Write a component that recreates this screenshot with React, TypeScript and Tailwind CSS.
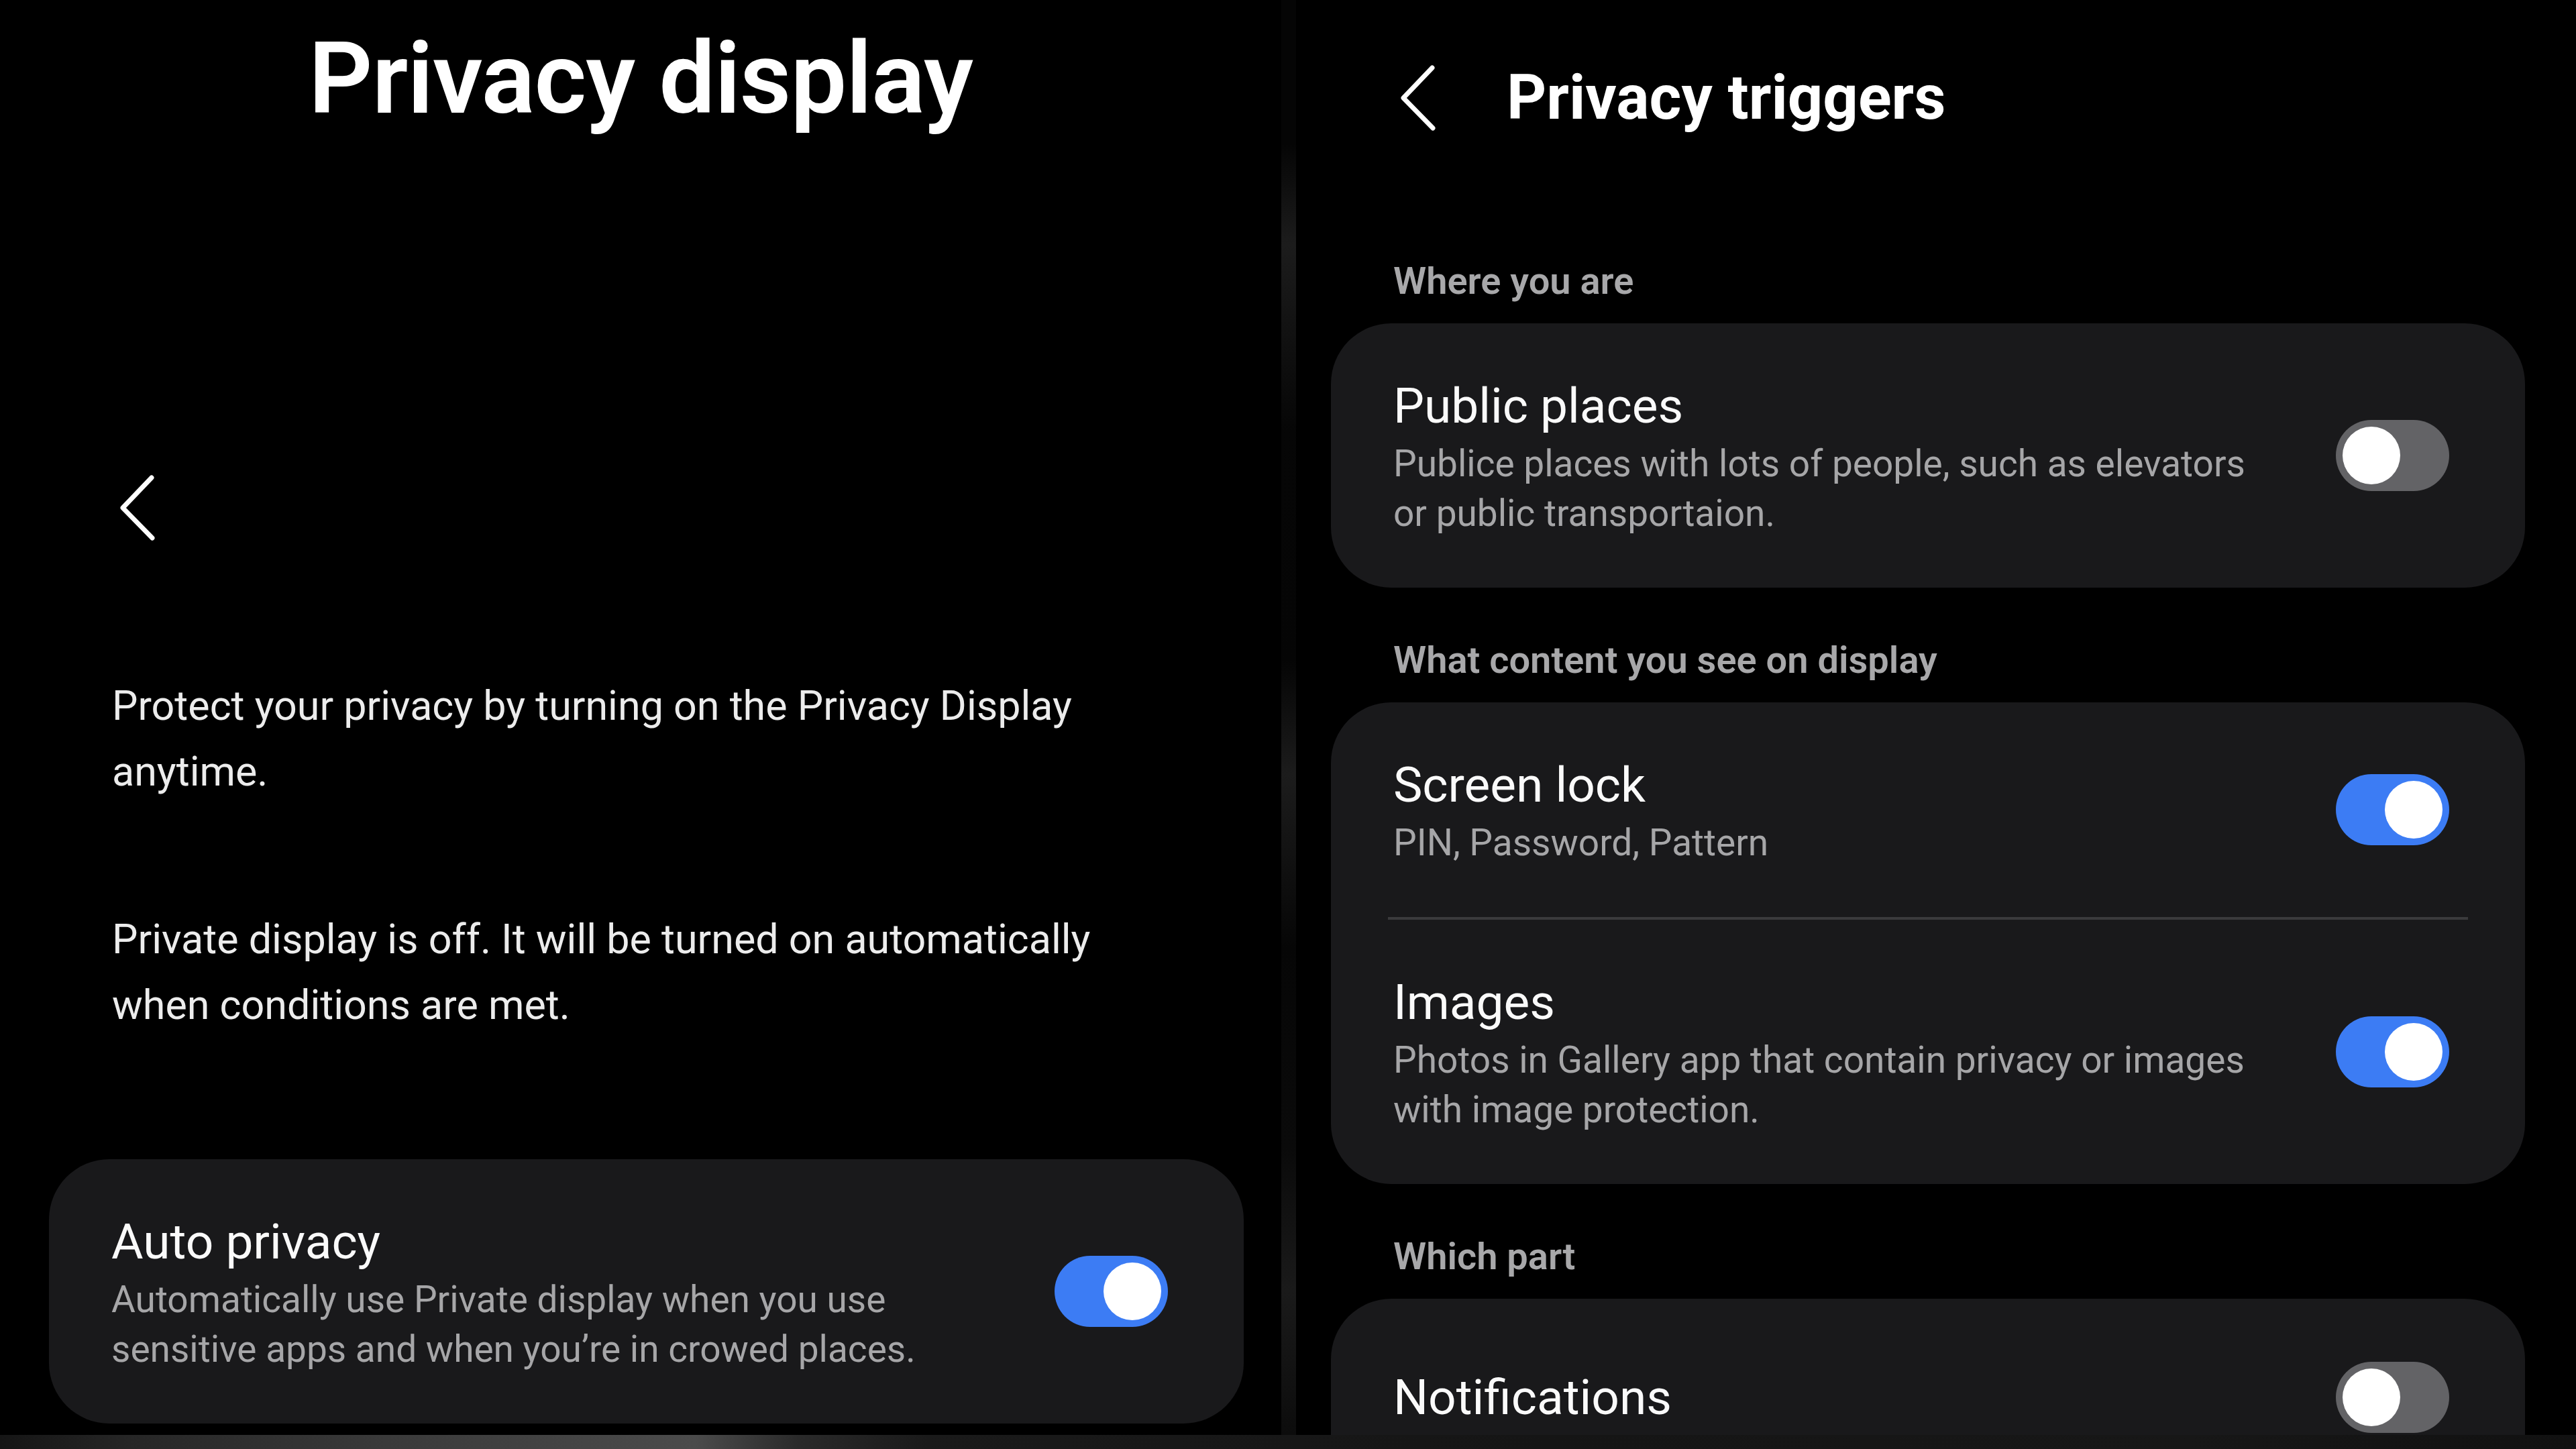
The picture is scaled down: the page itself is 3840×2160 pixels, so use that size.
import clsx from "clsx";

type Row = {
  title: string;
  desc?: string[];
  on: boolean;
};

function Chevron({ className }: { className?: string }) {
  return (
    <svg viewBox="0 0 60 100" className={className} fill="none" stroke="white" strokeWidth={7} strokeLinecap="round" strokeLinejoin="round">
      <polyline points="51,5 8,50 52,95" />
    </svg>
  );
}

function Toggle({ on }: { on: boolean }) {
  return (
    <div
      className={clsx(
        "w-[169px] h-[106px] rounded-full p-[10px] flex shrink-0",
        on ? "bg-[#3c7cf4] justify-end" : "bg-[#636366] justify-start"
      )}
    >
      <div className="w-[86px] h-[86px] rounded-full bg-white" />
    </div>
  );
}

function SettingRow({ title, desc, on }: Row) {
  return (
    <div className={clsx("flex items-center pl-[93px] pr-[113px]", desc ? "py-[74px]" : "py-[94px]")}>
      <div className="flex-1 min-w-0">
        <div className="text-[73px] leading-[98px] text-[#fafafa]">{title}</div>
        {desc?.map((line) => (
          <div key={line} className="text-[55px] leading-[74px] text-[#a6a6a8] whitespace-nowrap">
            {line}
          </div>
        ))}
      </div>
      <Toggle on={on} />
    </div>
  );
}

function Card({ rows }: { rows: Row[] }) {
  return (
    <div className="shrink-0 bg-[#19191b] rounded-[90px] overflow-hidden">
      {rows.map((row, i) => (
        <div key={row.title}>
          {i > 0 && <div className="mx-[85px] h-[4px] bg-[#3a3a3c]" />}
          <SettingRow {...row} />
        </div>
      ))}
    </div>
  );
}

function SectionHeader({ label, first }: { label: string; first?: boolean }) {
  return (
    <div
      className={clsx(
        "shrink-0 pl-[93px] pb-[28px] text-[56px] leading-[70px] font-semibold text-[#a8a8aa]",
        first ? "pt-[188px]" : "pt-[73px]"
      )}
    >
      {label}
    </div>
  );
}

export default function App() {
  return (
    <div className="w-[3840px] h-[2160px] bg-black flex flex-col overflow-hidden font-['Roboto','Noto_Sans',sans-serif]">
      <div className="flex flex-1 min-h-0">
        {/* Privacy display */}
        <section className="w-[1910px] shrink-0 flex flex-col overflow-hidden">
          <h1 className="shrink-0 pt-[43px] text-center text-[149px] leading-none font-semibold text-white tracking-[-1px]">
            Privacy display
          </h1>
          <Chevron className="shrink-0 ml-[175px] mt-[515px] w-[60px] h-[100px]" />
          <div className="shrink-0 mt-[196px] pl-[167px] text-[61px] leading-[98px] text-[#ececec]">
            <div>Protect your privacy by turning on the Privacy Display</div>
            <div>anytime.</div>
          </div>
          <div className="shrink-0 mt-[152px] pl-[167px] text-[61px] leading-[98px] text-[#ececec]">
            <div>Private display is off. It will be turned on automatically</div>
            <div>when conditions are met.</div>
          </div>
          <div className="shrink-0 mt-[181px] ml-[73px] mr-[56px]">
            <Card
              rows={[
                {
                  title: "Auto privacy",
                  desc: ["Automatically use Private display when you use", "sensitive apps and when you’re in crowed places."],
                  on: true,
                },
              ]}
            />
          </div>
        </section>

        {/* divider between the two shots */}
        <div className="w-[22px] shrink-0 bg-[linear-gradient(to_bottom,#050505_0%,#050505_10%,#1c1c1c_17%,#060606_30%,#050505_46%,#1c1c1c_54%,#060606_66%,#0a0a0a_80%,#1a1a1a_90%,#0c0c0c_100%)]" />

        {/* Privacy triggers */}
        <section className="flex-1 pl-[52px] pr-[76px] flex flex-col overflow-hidden">
          <div className="shrink-0 flex items-center h-[100px] mt-[96px]">
            <Chevron className="ml-[100px] w-[60px] h-[100px]" />
            <h2 className="ml-[102px] text-[92px] leading-none font-bold text-white">Privacy triggers</h2>
          </div>

          <SectionHeader label="Where you are" first />
          <Card
            rows={[
              {
                title: "Public places",
                desc: ["Publice places with lots of people, such as elevators", "or public transportaion."],
                on: false,
              },
            ]}
          />

          <SectionHeader label="What content you see on display" />
          <Card
            rows={[
              { title: "Screen lock", desc: ["PIN, Password, Pattern"], on: true },
              {
                title: "Images",
                desc: ["Photos in Gallery app that contain privacy or images", "with image protection."],
                on: true,
              },
            ]}
          />

          <SectionHeader label="Which part" />
          <Card rows={[{ title: "Notifications", on: false }]} />
        </section>
      </div>
      <div className="h-[21px] shrink-0 bg-[linear-gradient(to_right,#151515_0%,#262626_5%,#3a3a3a_15%,#4b4b4b_27%,#2a2a2a_31%,#1a1a1a_36%,#151515_60%,#171717_85%,#111111_100%)]" />
    </div>
  );
}
